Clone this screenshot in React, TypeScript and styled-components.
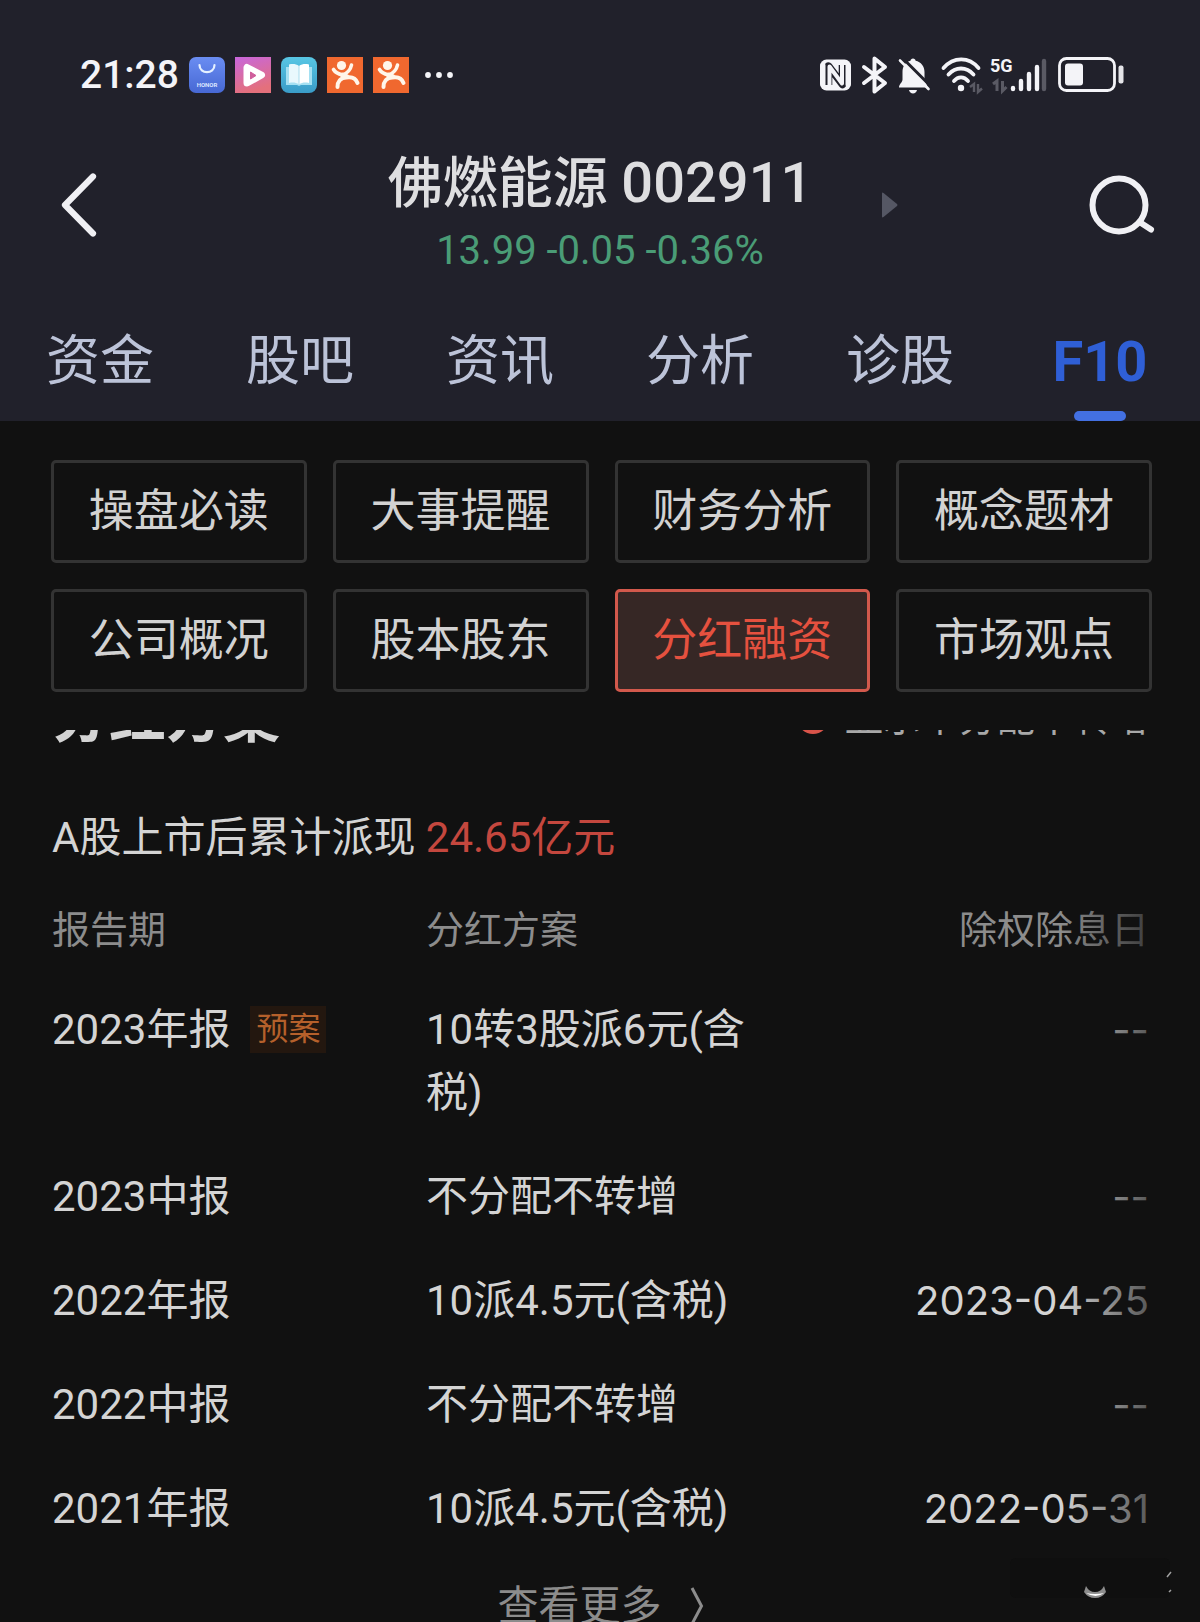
import React from "react";
import styled, { createGlobalStyle } from "styled-components";

const GlobalStyle = createGlobalStyle`
  *, *::before, *::after { box-sizing: border-box; }
  body {
    margin: 0;
    background: #111111;
    color: #d4d4d4;
    font-family: Roboto, "Noto Sans CJK SC", sans-serif;
  }
  button, input { font: inherit; margin: 0; }
`;

const Screen = styled.div`
  display: flex;
  flex-direction: column;
  height: 100vh;
  overflow: hidden;
`;

/* ---------- header ---------- */

const Header = styled.header`
  flex: none;
  background: #21212b;
`;

const StatusBar = styled.div`
  display: flex;
  align-items: center;
  justify-content: space-between;
  padding: 45px 76px 0 80px;
  height: 105px;
  color: #f4f4f8;
`;

const StatusGroup = styled.div<{ $gap: number }>`
  display: flex;
  align-items: center;
  gap: ${(p) => p.$gap}px;
  svg { display: block; flex: none; overflow: visible; }
`;

const Clock = styled.time`
  font-size: 39px;
  font-weight: 500;
  line-height: 60px;
`;

const TitleBar = styled.div`
  display: grid;
  grid-template-columns: 1fr auto 1fr;
  align-items: center;
  padding: 26px 44px 0;
`;

const IconButton = styled.button`
  display: flex;
  align-items: center;
  padding: 0;
  border: 0;
  background: none;
  color: #f0f0f4;
  cursor: pointer;
  svg { display: block; }
`;

const TitleStart = styled.div`
  padding-left: 12px;
`;

const TitleBlock = styled.div`
  padding-top: 12px;
  text-align: center;
`;

const StockName = styled.h1`
  margin: 0;
  font-size: 55px;
  font-weight: 500;
  line-height: 80px;
  color: #dedee0;
`;

const StockCode = styled.span`
  font-size: 56px;
`;

const Quote = styled.p`
  margin: 0;
  font-size: 40px;
  line-height: 56px;
  color: #4a9c76;
`;

const TitleEnd = styled.div`
  display: flex;
  align-items: center;
  justify-content: space-between;
  padding-left: 70px;
`;

const Tabs = styled.nav`
  display: grid;
  grid-template-columns: repeat(6, 1fr);
  margin-top: 17px;
`;

const Tab = styled.a<{ $active?: boolean }>`
  position: relative;
  padding: 26px 0 19px;
  text-align: center;
  text-decoration: none;
  font-size: ${(p) => (p.$active ? 56 : 54)}px;
  font-weight: ${(p) => (p.$active ? 700 : 400)};
  line-height: 80px;
  color: ${(p) => (p.$active ? "#2f5fd6" : "#bcc3d8")};
  &::after {
    content: "";
    display: ${(p) => (p.$active ? "block" : "none")};
    position: absolute;
    left: 50%;
    bottom: 0;
    width: 52px;
    height: 10px;
    margin-left: -26px;
    border-radius: 5px;
    background: #4370e2;
  }
`;

/* ---------- section menu ---------- */

const Menu = styled.div`
  flex: none;
  display: grid;
  grid-template-columns: repeat(4, 1fr);
  gap: 26px;
  padding: 39px 48px 38px 51px;
`;

const MenuButton = styled.button<{ $active?: boolean }>`
  height: 103px;
  padding: 0;
  border: 3px solid ${(p) => (p.$active ? "#d2594c" : "#333333")};
  border-radius: 5px;
  background: ${(p) => (p.$active ? "#362725" : "transparent")};
  color: ${(p) => (p.$active ? "#e5513f" : "#d2d2d2")};
  font-size: 45px;
  line-height: 60px;
  cursor: pointer;
`;

/* ---------- scrolled content ---------- */

const Scroller = styled.main`
  flex: 1;
  min-height: 0;
  overflow: hidden;
`;

const Scrolled = styled.div`
  margin-top: -54px;
  padding: 0 51px 0 52px;
`;

const SectionHead = styled.div`
  display: flex;
  align-items: center;
  justify-content: space-between;
  height: 84px;
`;

const SectionTitle = styled.h2`
  margin: 0;
  font-size: 57px;
  font-weight: 700;
  line-height: 84px;
`;

const Toggle = styled.label`
  display: flex;
  align-items: center;
  gap: 16px;
  font-size: 38px;
  line-height: 56px;
  color: #a8a8a8;
`;

const ToggleInput = styled.input`
  appearance: none;
  width: 32px;
  height: 32px;
  border: 3px solid #d9544a;
  border-radius: 50%;
  background: #d9544a;
`;

const Summary = styled.p`
  margin: 46px 0 0;
  font-size: 42px;
  line-height: 63px;
`;

const Amount = styled.strong`
  font-weight: 400;
  color: #c4473e;
`;

const TableWrap = styled.div`
  position: relative;
  margin-top: 13px;
`;

const EdgeFade = styled.div`
  position: absolute;
  top: 0;
  right: -51px;
  bottom: 0;
  width: 140px;
  background: linear-gradient(to right, rgba(17, 17, 17, 0), #111111);
  pointer-events: none;
`;

const Table = styled.table`
  width: 100%;
  table-layout: fixed;
  border-collapse: collapse;
  font-size: 42px;
  line-height: 63px;
`;

const HeadCell = styled.th<{ $end?: boolean; $width?: number }>`
  width: ${(p) => (p.$width ? `${p.$width}px` : "auto")};
  height: 96px;
  padding: 0;
  font-size: 38px;
  font-weight: 400;
  text-align: ${(p) => (p.$end ? "right" : "left")};
  color: #8c8c8c;
`;

const Cell = styled.td`
  padding: 20px 0 21px;
  vertical-align: top;
`;

const DateCell = styled(Cell)`
  font-family: Inter, sans-serif;
  font-size: 40px;
  text-align: right;
`;

const Period = styled.div`
  display: flex;
  align-items: center;
  gap: 20px;
`;

const Tag = styled.span`
  padding: 2px 6px;
  background: #23170f;
  color: #b5602b;
  font-size: 32px;
  line-height: 43px;
`;

const MoreButton = styled.button`
  display: flex;
  align-items: center;
  gap: 28px;
  margin: 14px auto 0;
  padding: 0;
  border: 0;
  background: none;
  color: #8c8c8c;
  font-size: 41px;
  line-height: 63px;
  cursor: pointer;
`;

const Watermark = styled.div`
  position: absolute;
  right: 26px;
  bottom: 20px;
  svg { display: block; }
`;

/* ---------- icons ---------- */

const HonorIcon = () => (
  <svg width="36" height="36" viewBox="0 0 36 36" aria-hidden="true">
    <defs>
      <linearGradient id="honor" x1="0" y1="0" x2="0" y2="1">
        <stop offset="0" stopColor="#6a8df2" />
        <stop offset="1" stopColor="#4768d4" />
      </linearGradient>
    </defs>
    <rect width="36" height="36" rx="7" fill="url(#honor)" />
    <path d="M10.500 8c0 9.500 15 9.500 15 0" fill="none" stroke="#e4f0ff" strokeWidth="2.200" strokeLinecap="round" />
    <text x="18" y="30" textAnchor="middle" fontSize="6" fontWeight="700" fontFamily="Roboto" fill="#dce6ff">HONOR</text>
  </svg>
);

const VideoIcon = () => (
  <svg width="36" height="36" viewBox="0 0 36 36" aria-hidden="true">
    <defs>
      <linearGradient id="video" x1="0" y1="0" x2="0.300" y2="1">
        <stop offset="0" stopColor="#c866dc" />
        <stop offset="1" stopColor="#e4707c" />
      </linearGradient>
    </defs>
    <rect width="36" height="36" fill="url(#video)" />
    <path d="M12 10.500v15.500l14.500-8z" fill="#fff" stroke="#fff" strokeWidth="7" strokeLinejoin="round" />
    <path d="M15.500 15v7l5.500-3.500z" fill="#cf5f9c" stroke="#cf5f9c" strokeWidth="1" strokeLinejoin="round" />
  </svg>
);

const BookIcon = () => (
  <svg width="36" height="36" viewBox="0 0 36 36" aria-hidden="true">
    <defs>
      <linearGradient id="book" x1="0" y1="0" x2="0" y2="1">
        <stop offset="0" stopColor="#58c6e4" />
        <stop offset="1" stopColor="#3a9cc8" />
      </linearGradient>
    </defs>
    <rect width="36" height="36" rx="8" fill="url(#book)" />
    <path d="M5 10h26v18H20l-2 1-2-1H5z" fill="#a5e0f2" />
    <path d="M8 7.500c4-1 7-.5 10 1.500v18.500c-3-2-6-2.500-10-1.500z" fill="#e9f8fd" />
    <path d="M28 7.500c-4-1-7-.5-10 1.500v18.500c3-2 6-2.500 10-1.500z" fill="#ffffff" />
    <path d="M18 9v18.500" stroke="#a9dced" strokeWidth="1" />
  </svg>
);

const RunnerIcon = () => (
  <svg width="36" height="36" viewBox="0 0 36 36" aria-hidden="true">
    <rect width="36" height="36" fill="#f0682f" />
    <circle cx="14.500" cy="8.500" r="4.600" fill="#fff6ea" />
    <g fill="none" stroke="#fff6ea" strokeLinecap="round" strokeLinejoin="round">
      <path d="M6.500 12.500c2 3.500 5 4.500 9 5.500 4-1.500 8-5 9-10" strokeWidth="3.600" />
      <path d="M15.500 18l4 1.500" strokeWidth="5" />
      <path d="M10.500 30c0-5 3-9.500 9-9.500 6-1 9.500 1.500 11 5.500" strokeWidth="4" />
    </g>
  </svg>
);

const MoreDots = () => (
  <svg width="34" height="36" viewBox="0 0 34 36" fill="currentColor" aria-hidden="true">
    <circle cx="9" cy="18" r="2.900" />
    <circle cx="20" cy="18" r="2.900" />
    <circle cx="31" cy="18" r="2.900" />
  </svg>
);

const NfcIcon = () => (
  <svg width="31" height="32" viewBox="0 0 31 32" aria-hidden="true">
    <rect x="0" y="0.500" width="31" height="31" rx="6.500" fill="#f4f4f8" />
    <path d="M8.500 26V7l14 18.500V6" fill="none" stroke="#21212b" strokeWidth="7.600" strokeLinejoin="round" />
    <path d="M9.500 31V7.500l12.500 17V1" fill="none" stroke="#f4f4f8" strokeWidth="4" strokeLinejoin="round" />
    <path d="M3 6.500v19M28 6.500v19" stroke="#f4f4f8" strokeWidth="5" strokeLinecap="round" />
  </svg>
);

const BluetoothIcon = () => (
  <svg width="25" height="38" viewBox="0 0 25 38" fill="none" stroke="currentColor" strokeWidth="4" strokeLinecap="round" strokeLinejoin="round" aria-hidden="true">
    <path d="M2 11l21 16-10.500 8.500v-33L23 11 2 27" />
  </svg>
);

const BellOffIcon = () => (
  <svg width="32" height="38" viewBox="0 0 32 38" aria-hidden="true">
    <path d="M15 2.500c1.500 0 2.400 1 2.600 2.200C23 6 26.500 10 26.500 16v7.500c0 3 3 4.500 3 8H1c0-3.500 3.500-5 3.500-8V16c0-6 3-10 8-11.300.2-1.200 1-2.200 2.500-2.200z" fill="#f4f4f8" />
    <path d="M11 34h8c-.5 2.200-2 3.500-4 3.500S11.500 36.200 11 34z" fill="#f4f4f8" />
    <path d="M4 1.500L33.500 31" stroke="#21212b" strokeWidth="3" />
    <path d="M2 4.500L30.500 33" stroke="#f4f4f8" strokeWidth="2.600" strokeLinecap="round" />
  </svg>
);

const WifiIcon = () => (
  <svg width="40" height="36" viewBox="0 0 40 36" aria-hidden="true">
    <g fill="none" stroke="#f4f4f8" strokeWidth="3.800" strokeLinecap="round">
      <path d="M2.500 11C12.500-.5 28 -.5 37.500 11" />
      <path d="M7.500 17.500c7-8 18-8 25 0" />
      <path d="M13 24c4-4.800 10-4.800 14 0" />
    </g>
    <circle cx="20" cy="31" r="3.200" fill="#f4f4f8" />
    <path d="M29 30l4-3v8M37 27v8l4-3.500" fill="none" stroke="#5a5a64" strokeWidth="2.400" />
  </svg>
);

const SignalIcon = () => (
  <svg width="55" height="36" viewBox="0 0 55 36" aria-hidden="true">
    <text x="-2" y="15" fontSize="18" fontWeight="700" fontFamily="Roboto" fill="#f4f4f8">5G</text>
    <path d="M1 27l4-3v10M10.500 24v10l4-4" fill="none" stroke="#5a5a64" strokeWidth="3" />
    <g stroke="#f4f4f8" strokeWidth="4.400" strokeLinecap="round">
      <path d="M21 31v1M29 24v8M37 17v15M45 10v22" />
      <path d="M52 4v28" stroke="#5a5a64" />
    </g>
  </svg>
);

const BatteryIcon = () => (
  <svg width="66" height="36" viewBox="0 0 66 36" aria-hidden="true">
    <rect x="1.500" y="1.500" width="55" height="32" rx="7" fill="none" stroke="#f4f4f8" strokeWidth="2.800" />
    <rect x="7" y="6.500" width="18" height="22" rx="3" fill="#f4f4f8" />
    <rect x="60.500" y="8.500" width="5" height="18" rx="2" fill="#e4e4e8" />
  </svg>
);

const BackIcon = () => (
  <svg width="44" height="66" viewBox="0 0 44 66" fill="none" stroke="currentColor" strokeWidth="6.200" strokeLinecap="round" strokeLinejoin="round" aria-hidden="true">
    <path d="M37 4.500L9 33l28 28.500" />
  </svg>
);

const SearchIcon = () => (
  <svg width="68" height="62" viewBox="0 0 68 62" fill="none" stroke="currentColor" strokeWidth="6" strokeLinecap="round" aria-hidden="true">
    <circle cx="31" cy="31" r="26.500" />
    <path d="M53 49l10 6.500" />
  </svg>
);

const NextIcon = () => (
  <svg width="16" height="26" viewBox="0 0 16 26" fill="#555764" aria-hidden="true">
    <path d="M0 1.500Q0 0 1.500 1L15 12q1 1 0 2L1.500 25Q0 26 0 24.500z" />
  </svg>
);

const ChevronIcon = () => (
  <svg width="14" height="42" viewBox="0 0 14 42" fill="none" stroke="currentColor" strokeWidth="3" aria-hidden="true">
    <path d="M2 2l9.500 18L2 38" />
  </svg>
);

/* ---------- data ---------- */

const tabs = ["资金", "股吧", "资讯", "分析", "诊股", "F10"];

const sections = [
  "操盘必读", "大事提醒", "财务分析", "概念题材",
  "公司概况", "股本股东", "分红融资", "市场观点",
];

const plans = [
  { period: "2023年报", tag: "预案", plan: "10转3股派6元(含税)", date: "--" },
  { period: "2023中报", plan: "不分配不转增", date: "--" },
  { period: "2022年报", plan: "10派4.5元(含税)", date: "2023-04-25" },
  { period: "2022中报", plan: "不分配不转增", date: "--" },
  { period: "2021年报", plan: "10派4.5元(含税)", date: "2022-05-31" },
];

export default function App() {
  return (
    <Screen lang="zh-CN">
      <GlobalStyle />
      <Header>
        <StatusBar>
          <StatusGroup $gap={10}>
            <Clock>21:28</Clock>
            <HonorIcon />
            <VideoIcon />
            <BookIcon />
            <RunnerIcon />
            <RunnerIcon />
            <MoreDots />
          </StatusGroup>
          <StatusGroup $gap={11}>
            <NfcIcon />
            <BluetoothIcon />
            <BellOffIcon />
            <WifiIcon />
            <SignalIcon />
            <BatteryIcon />
          </StatusGroup>
        </StatusBar>
        <TitleBar>
          <TitleStart>
            <IconButton type="button" aria-label="返回"><BackIcon /></IconButton>
          </TitleStart>
          <TitleBlock>
            <StockName>佛燃能源 <StockCode>002911</StockCode></StockName>
            <Quote>13.99 -0.05 -0.36%</Quote>
          </TitleBlock>
          <TitleEnd>
            <IconButton type="button" aria-label="下一只"><NextIcon /></IconButton>
            <IconButton type="button" aria-label="搜索"><SearchIcon /></IconButton>
          </TitleEnd>
        </TitleBar>
        <Tabs>
          {tabs.map((name) => (
            <Tab key={name} href="#" $active={name === "F10"}>{name}</Tab>
          ))}
        </Tabs>
      </Header>
      <Menu>
        {sections.map((name) => (
          <MenuButton key={name} type="button" $active={name === "分红融资"}>{name}</MenuButton>
        ))}
      </Menu>
      <Scroller>
        <Scrolled>
          <SectionHead>
            <SectionTitle>分红方案</SectionTitle>
            <Toggle>
              <ToggleInput type="checkbox" defaultChecked />
              显示不分配不转增
            </Toggle>
          </SectionHead>
          <Summary>A股上市后累计派现 <Amount>24.65亿元</Amount></Summary>
          <TableWrap>
            <Table>
              <thead>
                <tr>
                  <HeadCell $width={374}>报告期</HeadCell>
                  <HeadCell $width={340}>分红方案</HeadCell>
                  <HeadCell $end>除权除息日</HeadCell>
                </tr>
              </thead>
              <tbody>
                {plans.map((row) => (
                  <tr key={row.period}>
                    <Cell>
                      <Period>
                        {row.period}
                        {row.tag && <Tag>{row.tag}</Tag>}
                      </Period>
                    </Cell>
                    <Cell>{row.plan}</Cell>
                    <DateCell>{row.date}</DateCell>
                  </tr>
                ))}
              </tbody>
            </Table>
            <EdgeFade />
          </TableWrap>
          <MoreButton type="button">查看更多 <ChevronIcon /></MoreButton>
        </Scrolled>
      </Scroller>
      <Watermark aria-hidden="true">
        <svg width="164" height="44" viewBox="0 0 164 44">
          <rect width="160" height="40" rx="6" fill="#0f0f0f" />
          <path d="M76 28q3 6 9 6t9-6l2 6q-4 6-11 6t-11-6z" fill="#8c8c8c" />
          <path d="M76 35q9 2 18 0-8 6-18 0z" fill="#ffffff" />
          <path d="M161 14l-4 5M161 32l-2 2" stroke="#a0a0a0" strokeWidth="1.500" />
        </svg>
      </Watermark>
    </Screen>
  );
}
